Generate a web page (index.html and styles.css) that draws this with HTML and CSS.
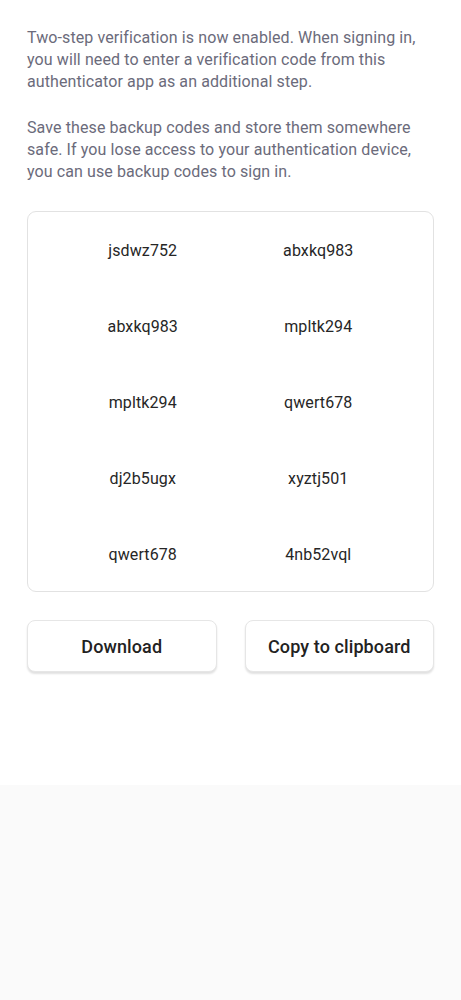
FILE: index.html
```html
<!DOCTYPE html>
<html>
<head>
<meta charset="utf-8">
<link rel="stylesheet" href="styles.css">
</head>
<body>
<div class="page">
  <main class="content">
    <p class="intro">Two-step verification is now enabled. When signing in, you will need to enter a verification code from this authenticator app as an additional step.</p>
    <p class="intro">Save these backup codes and store them somewhere safe. If you lose access to your authentication device, you can use backup codes to sign in.</p>
    <div class="codes">
      <span class="code">jsdwz752</span><span class="code">abxkq983</span>
      <span class="code">abxkq983</span><span class="code">mpltk294</span>
      <span class="code">mpltk294</span><span class="code">qwert678</span>
      <span class="code">dj2b5ugx</span><span class="code">xyztj501</span>
      <span class="code">qwert678</span><span class="code">4nb52vql</span>
    </div>
    <div class="actions">
      <button class="btn">Download</button>
      <button class="btn">Copy to clipboard</button>
    </div>
  </main>
  <div class="footer"></div>
</div>
</body>
</html>
```
FILE: styles.css
```css
html, body {
  margin: 0;
  padding: 0;
  background: #fafafa;
}
body {
  font-family: Roboto, "Liberation Sans", sans-serif;
}
.page {
  display: flex;
  flex-direction: column;
  min-height: 1000px;
}
.content {
  background: #ffffff;
  padding: 27px 27px 0 27px;
  height: 758px;
}
.intro {
  margin: 0 0 24px 0;
  font-size: 16px;
  line-height: 22px;
  letter-spacing: 0.1px;
  color: #6b6b7b;
}
.codes {
  margin-top: 28px;
  border: 1px solid #e2e2e2;
  border-radius: 9px;
  display: grid;
  grid-template-columns: 1fr 1fr;
  grid-auto-rows: 76px;
  padding: 0 27px;
  box-sizing: border-box;
  height: 381px;
}
.code {
  display: flex;
  align-items: center;
  justify-content: center;
  font-size: 16px;
  letter-spacing: 0.1px;
  color: #262626;
}
.actions {
  margin-top: 28px;
  display: grid;
  grid-template-columns: 1fr 1fr;
  gap: 28px;
}
.btn {
  height: 52px;
  background: #ffffff;
  border: 1px solid #e6e6e6;
  border-radius: 8px;
  box-shadow: 0 2px 2px rgba(0, 0, 0, 0.12);
  font-family: Roboto, "Liberation Sans", sans-serif;
  font-size: 18px;
  font-weight: 500;
  letter-spacing: 0.1px;
  color: #222222;
  padding: 0;
}
.footer {
  flex: 1;
  background: #fafafa;
}
```
